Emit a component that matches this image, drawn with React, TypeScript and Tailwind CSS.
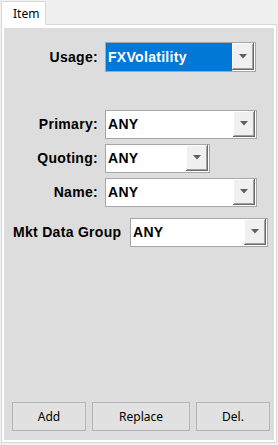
import React from "react";

const labelFont = { fontFamily: '"Liberation Sans", Arial, sans-serif' };
const uiFont = { fontFamily: '"Noto Sans", "Open Sans", sans-serif' };

function Arrow() {
    return (
        <svg width="8" height="5" viewBox="0 0 8 5">
            <polygon points="0,0 8,0 4,4.5" fill="#5f5f5f" />
        </svg>
    );
}

interface ComboProps {
    value: string,
    width: string,
    selected?: boolean,
    tall?: boolean
}

function Combo({ value, width, selected, tall }: ComboProps) {
    return (
        <div className={`flex border border-[#a7a7a7] bg-white ${width} ${tall ? "h-[30px]" : "h-[29px]"}`}>
            <div className={`flex-1 flex items-center pl-[2px] text-[14px] font-bold tracking-[0.3px] ${selected ? "bg-[#0078d7] text-white" : "text-black"}`} style={labelFont}>
                {value}
            </div>
            <div className="w-[22px] flex items-center justify-center bg-[#f0f0f0] border-r border-b border-[#6a6a6a] shadow-[inset_1px_1px_0_#ffffff,inset_-1px_-1px_0_#a0a0a0] mb-[1px] mr-[1px]">
                <Arrow />
            </div>
        </div>
    );
}

function Row({ label, children }: { label: string, children: React.ReactNode }) {
    return (
        <div className="flex items-center">
            <div className="w-[94px] text-right text-[14px] font-bold tracking-[0.3px] text-black" style={labelFont}>{label}</div>
            <div className="ml-[7px]">{children}</div>
        </div>
    );
}

export default function App() {
    return (
        <div className="w-[278px] h-[445px] bg-[#f0f0f0] flex flex-col">
            <div className="flex h-[24px] pt-[1px] pl-[1px]">
                <div className="w-[45px] h-[24px] border border-b-0 border-[#d9d9d9] bg-white relative z-10 flex items-center pl-[11px] text-[12px] text-black" style={uiFont}>
                    Item
                </div>
            </div>
            <div className="flex-1 ml-[1px] mr-[1px] mb-[2px] border border-[#d9d9d9] bg-white pt-[3px] pl-[2px] pr-[2px] pb-[2px] flex">
                <div className="flex-1 bg-[#dddddd] flex flex-col pt-[14px] pb-[9px]">
                    <Row label="Usage:">
                        <Combo value="FXVolatility" width="w-[151px]" selected tall />
                    </Row>
                    <div className="mt-[38px] flex flex-col gap-[5px]">
                        <Row label="Primary:">
                            <Combo value="ANY" width="w-[152px]" />
                        </Row>
                        <Row label="Quoting:">
                            <Combo value="ANY" width="w-[105px]" />
                        </Row>
                        <Row label="Name:">
                            <Combo value="ANY" width="w-[152px]" />
                        </Row>
                    </div>
                    <div className="mt-[11px] flex items-center pl-[9px]">
                        <div className="w-[117px] text-[14px] font-bold tracking-[0.3px] text-black" style={labelFont}>Mkt Data Group</div>
                        <Combo value="ANY" width="w-[138px]" />
                    </div>
                    <div className="mt-auto flex gap-[6px] pl-[8px]">
                        <button className="w-[74px] h-[29px] border border-[#b4b4b4] bg-[#e1e1e1] text-[12px] text-black" style={uiFont}>Add</button>
                        <button className="w-[98px] h-[29px] border border-[#b4b4b4] bg-[#e1e1e1] text-[12px] text-black" style={uiFont}>Replace</button>
                        <button className="w-[74px] h-[29px] border border-[#b4b4b4] bg-[#e1e1e1] text-[12px] text-black" style={uiFont}>Del.</button>
                    </div>
                </div>
            </div>
        </div>
    );
}
